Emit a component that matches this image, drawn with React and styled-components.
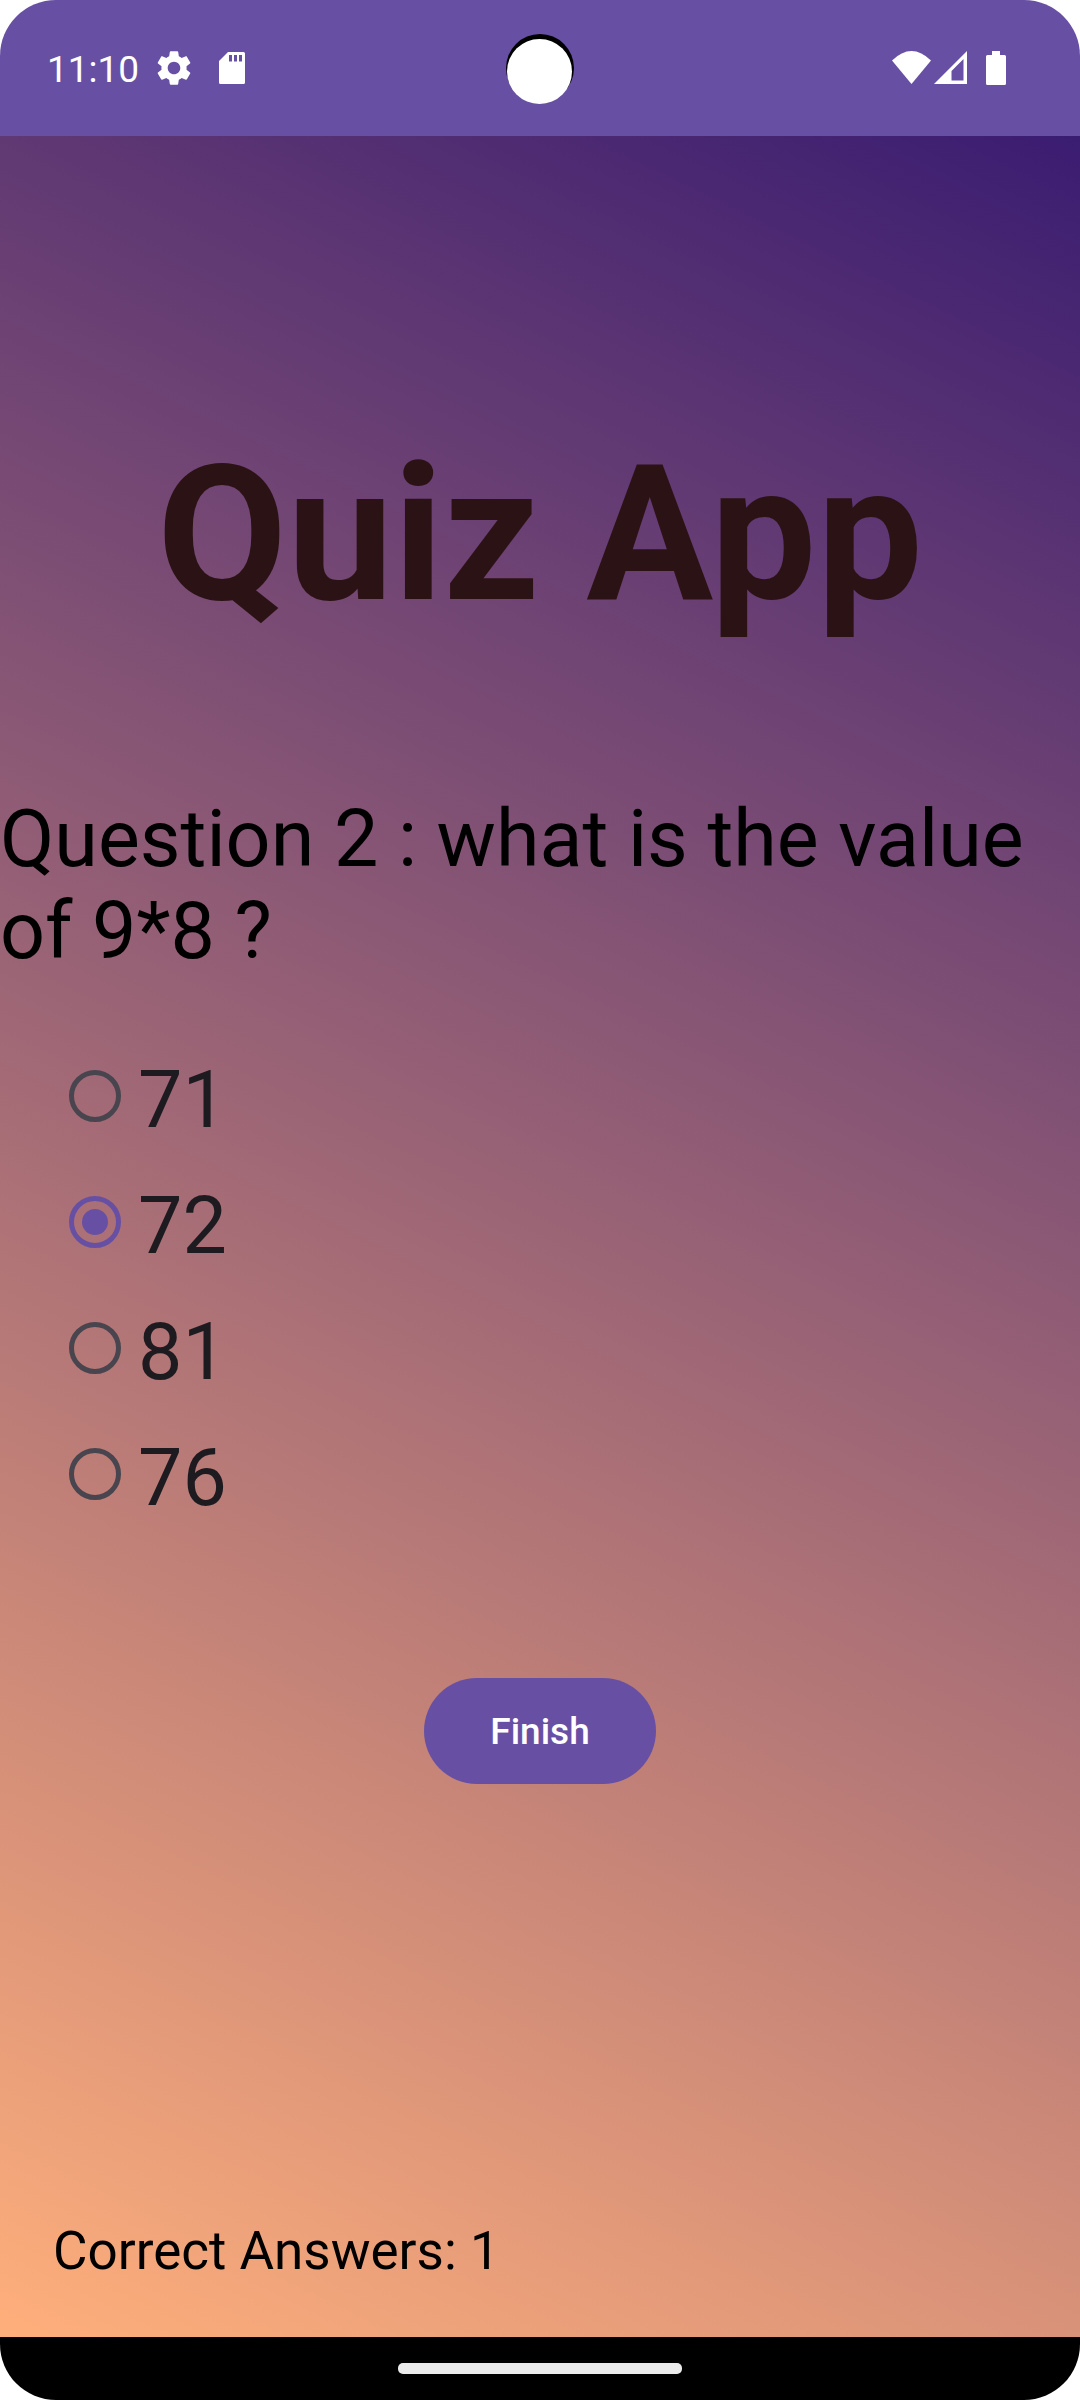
import React, { useState } from "react";
import styled, { createGlobalStyle } from "styled-components";

const GlobalStyle = createGlobalStyle`
  * { box-sizing: border-box; }
  body { margin: 0; background: #fff; font-family: Roboto, "Noto Sans", sans-serif; }
`;

const Screen = styled.div`
  display: flex;
  flex-direction: column;
  min-height: 100vh;
  border-radius: 56px;
  overflow: hidden;
`;

const StatusBar = styled.header`
  display: grid;
  grid-template-columns: 1fr auto 1fr;
  align-items: center;
  height: 136px;
  padding: 0 47px;
  background: #6750a3;
  color: #fff;
`;

const StatusGroup = styled.div`
  display: flex;
  align-items: center;
  justify-content: ${(p) => (p.$end ? "flex-end" : "flex-start")};
  padding-right: ${(p) => (p.$end ? "27px" : "0")};
`;

const Clock = styled.time`
  padding-top: 4px;
  font-size: 37px;
  line-height: 44px;
  margin-right: 14px;
`;

const Icon = styled.svg`
  display: block;
  flex: none;
  margin-right: ${(p) => p.$gap || 0}px;
`;

const Main = styled.main`
  flex: 1;
  display: flex;
  flex-direction: column;
  padding: 288px 0 55px;
  background: linear-gradient(26deg, #ffaf7b, #3a1c71);
`;

const Title = styled.h1`
  margin: 0 0 147px;
  color: #2b1214;
  font-size: 189px;
  font-weight: 700;
  line-height: 222px;
  text-align: center;
`;

const Quiz = styled.form`
  display: flex;
  flex-direction: column;
`;

const Options = styled.fieldset`
  display: flex;
  flex-direction: column;
  min-width: 0;
  margin: 0;
  padding: 0;
  border: 0;
`;

const Question = styled.legend`
  padding: 0;
  margin-bottom: 56px;
  color: #000;
  font-size: 79px;
  line-height: 92px;
`;

const Option = styled.label`
  display: flex;
  align-items: center;
  gap: 17px;
  height: 126px;
  padding-left: 69px;
  color: #1d1b20;
`;

const Radio = styled.input`
  appearance: none;
  display: grid;
  place-items: center;
  width: 52px;
  height: 52px;
  margin: 0;
  border: 5px solid #49454f;
  border-radius: 50%;

  &:checked { border-color: #6750a3; }
  &:checked::before {
    content: "";
    width: 26px;
    height: 26px;
    border-radius: 50%;
    background: #6750a3;
  }
`;

const OptionText = styled.span`
  padding-top: 8px;
  font-size: 79px;
  line-height: 92px;
`;

const FinishButton = styled.button`
  align-self: center;
  height: 106px;
  margin-top: 141px;
  padding: 2px 66px 0;
  border: 0;
  border-radius: 53px;
  background: #6750a3;
  color: #fff;
  font-family: inherit;
  font-size: 37px;
  font-weight: 500;
  line-height: 44px;
`;

const Score = styled.p`
  margin: auto 0 0;
  padding: 0 53px;
  color: #000;
  font-size: 53px;
  line-height: 62px;
`;

const NavBar = styled.footer`
  display: flex;
  align-items: center;
  justify-content: center;
  height: 63px;
  background: #000;
`;

const HomeHandle = styled.div`
  width: 284px;
  height: 11px;
  border-radius: 5px;
  background: #ebebeb;
`;

const answers = ["71", "72", "81", "76"];

export default function App() {
  const [selected, setSelected] = useState("72");
  return (
    <>
      <GlobalStyle />
      <Screen>
        <StatusBar>
          <StatusGroup>
            <Clock>11:10</Clock>
            <Icon $gap={24} width="42" height="42" viewBox="0 0 24 24" fill="#fff" aria-hidden="true">
              <path d="M19.14 12.94c.04-.3.06-.61.06-.94 0-.32-.02-.64-.07-.94l2.03-1.58c.18-.14.23-.41.12-.61l-1.92-3.32c-.12-.22-.37-.29-.59-.22l-2.39.96c-.5-.38-1.03-.7-1.62-.94l-.36-2.54c-.04-.24-.24-.41-.48-.41h-3.84c-.24 0-.43.17-.47.41l-.36 2.54c-.59.24-1.13.57-1.62.94l-2.39-.96c-.22-.08-.47 0-.59.22L2.74 8.87c-.12.21-.08.47.12.61l2.03 1.58c-.05.3-.09.63-.09.94s.02.64.07.94l-2.03 1.58c-.18.14-.23.41-.12.61l1.92 3.32c.12.22.37.29.59.22l2.39-.96c.5.38 1.03.7 1.62.94l.36 2.54c.05.24.24.41.48.41h3.84c.24 0 .44-.17.47-.41l.36-2.54c.59-.24 1.13-.56 1.62-.94l2.39.96c.22.08.47 0 .59-.22l1.92-3.32c.12-.22.07-.47-.12-.61l-2.01-1.58zM12 15.6c-1.98 0-3.6-1.62-3.6-3.6s1.62-3.6 3.6-3.6 3.6 1.62 3.6 3.6-1.62 3.6-3.6 3.6z" />
            </Icon>
            <Icon width="26" height="32" viewBox="0 0 26 32" fill="#fff" aria-hidden="true">
              <path fillRule="evenodd" d="M9 0H24.500Q26 0 26 1.500V30.500Q26 32 24.500 32H1.500Q0 32 0 30.500V9ZM10 3V9.500H13V3ZM15 3V9.500H18V3ZM20 3V9.500H23V3Z" />
            </Icon>
          </StatusGroup>
          <Icon width="68" height="76" viewBox="0 -4 68 76" aria-hidden="true">
            <circle cx="34" cy="34" r="34" fill="#000" />
            <circle cx="33.5" cy="37.5" r="32.5" fill="#fff" />
          </Icon>
          <StatusGroup $end>
            <Icon $gap={3} width="39" height="34" viewBox="0 0 39 34" fill="#fff" aria-hidden="true">
              <path d="M0 9.5Q19.5 -9.5 39 9.5L19.5 33Z" />
            </Icon>
            <Icon $gap={19} width="33" height="34" viewBox="0 0 33 34" fill="#fff" aria-hidden="true">
              <path fillRule="evenodd" d="M33 0V33H0ZM29.5 8L17.5 20V29.5H29.5Z" />
            </Icon>
            <Icon width="20" height="34" viewBox="0 0 20 34" fill="#fff" aria-hidden="true">
              <path d="M6 0h8v4h4.500q1.500 0 1.500 1.500V32.500q0 1.500-1.500 1.500H1.500Q0 34 0 32.500V5.500Q0 4 1.500 4H6Z" />
            </Icon>
          </StatusGroup>
        </StatusBar>
        <Main>
          <Title>Quiz App</Title>
          <Quiz onSubmit={(e) => e.preventDefault()}>
            <Options>
              <Question>Question 2 : what is the value of 9*8 ?</Question>
              {answers.map((a) => (
                <Option key={a}>
                  <Radio type="radio" name="answer" value={a} checked={selected === a} onChange={() => setSelected(a)} />
                  <OptionText>{a}</OptionText>
                </Option>
              ))}
            </Options>
            <FinishButton type="submit">Finish</FinishButton>
          </Quiz>
          <Score>Correct Answers: 1</Score>
        </Main>
        <NavBar>
          <HomeHandle />
        </NavBar>
      </Screen>
    </>
  );
}
